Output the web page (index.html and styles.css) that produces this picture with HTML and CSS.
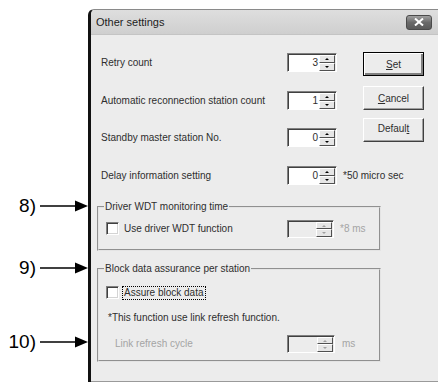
FILE: index.html
```html
<!DOCTYPE html>
<html lang="en">
<head>
<meta charset="UTF-8">
<title>Other settings</title>
<link rel="stylesheet" href="styles.css">
</head>
<body>
<div class="page">
    <div class="callouts">
        <div class="callout c8"><span>8)</span><svg width="48" height="12" viewBox="0 0 48 12"><line x1="0" y1="6" x2="36" y2="6" stroke="#000" stroke-width="1.3"/><polygon points="35,0.5 48,6 35,11.5" fill="#000"/></svg></div>
        <div class="callout c9"><span>9)</span><svg width="48" height="12" viewBox="0 0 48 12"><line x1="0" y1="6" x2="36" y2="6" stroke="#000" stroke-width="1.3"/><polygon points="35,0.5 48,6 35,11.5" fill="#000"/></svg></div>
        <div class="callout c10"><span>10)</span><svg width="48" height="12" viewBox="0 0 48 12"><line x1="0" y1="6" x2="36" y2="6" stroke="#000" stroke-width="1.3"/><polygon points="35,0.5 48,6 35,11.5" fill="#000"/></svg></div>
    </div>

    <div class="dialog">
        <div class="titlebar">
            <span class="title">Other settings</span>
            <span class="close"><svg width="10" height="8" viewBox="0 0 10 8"><path d="M1 0.5 L9 7.5 M9 0.5 L1 7.5" stroke="#fff" stroke-width="2"/></svg></span>
        </div>
        <div class="client">
            <div class="top">
                <div class="rows">
                    <div class="row">
                        <span class="label">Retry count</span>
                        <div class="spin"><span class="val">3</span><span class="btns"><i class="up"></i><i class="down"></i></span></div>
                    </div>
                    <div class="row">
                        <span class="label">Automatic reconnection station count</span>
                        <div class="spin"><span class="val">1</span><span class="btns"><i class="up"></i><i class="down"></i></span></div>
                    </div>
                    <div class="row">
                        <span class="label">Standby master station No.</span>
                        <div class="spin"><span class="val">0</span><span class="btns"><i class="up"></i><i class="down"></i></span></div>
                    </div>
                    <div class="row">
                        <span class="label">Delay information setting</span>
                        <div class="spin"><span class="val">0</span><span class="btns"><i class="up"></i><i class="down"></i></span></div>
                        <span class="suffix">*50 micro sec</span>
                    </div>
                </div>
                <div class="buttons">
                    <div class="btn default-btn"><span><u>S</u>et</span></div>
                    <div class="btn cancel"><span><u>C</u>ancel</span></div>
                    <div class="btn reset"><span>Defaul<u>t</u></span></div>
                </div>
            </div>

            <fieldset class="group wdt">
                <legend>Driver WDT monitoring time</legend>
                <div class="grow">
                    <span class="check"></span>
                    <span class="glabel">Use driver WDT function</span>
                    <div class="spin off small"><span class="val"></span><span class="btns"><i class="up"></i><i class="down"></i></span></div>
                    <span class="suffix dim">*8 ms</span>
                </div>
            </fieldset>

            <fieldset class="group block">
                <legend>Block data assurance per station</legend>
                <div class="grow assure">
                    <span class="check"></span>
                    <span class="focus">Assure block data</span>
                </div>
                <div class="note">*This function use link refresh function.</div>
                <div class="grow link">
                    <span class="linklabel dim">Link refresh cycle</span>
                    <div class="spin off mid"><span class="val"></span><span class="btns"><i class="up"></i><i class="down"></i></span></div>
                    <span class="suffix dim ms">ms</span>
                </div>
            </fieldset>
        </div>
    </div>
</div>
</body>
</html>
```

FILE: styles.css
```css
body {
    margin: 0;
    background: #fff;
    font-family: "Liberation Sans", Arial, sans-serif;
    font-size: 10px;
    color: #2e2e2e;
}
.page {
    display: flex;
    height: 383px;
    overflow: hidden;
}

/* callout numbers on the left */
.callouts {
    width: 88px;
    flex: none;
    padding-top: 195px;
    display: flex;
    flex-direction: column;
}
.callout {
    display: flex;
    align-items: center;
    justify-content: flex-end;
    gap: 4px;
    height: 22px;
    font-size: 19px;
    color: #000;
}
.c9 {
    margin-top: 40px;
}
.c10 {
    margin-top: 52px;
}

/* dialog window */
.dialog {
    margin-top: 9px;
    width: 347px;
    height: 372px;
    flex: none;
    border-left: 3px solid #111;
    border-top: 1px solid #8a8a8a;
    border-top-left-radius: 6px;
    background: #ececec;
    display: flex;
    flex-direction: column;
    overflow: hidden;
}
.titlebar {
    height: 24px;
    flex: none;
    display: flex;
    align-items: center;
    justify-content: space-between;
    padding: 0 6px 0 5px;
    background: linear-gradient(#dedede, #cfcfcf);
    border-bottom: 1px solid #c4c4c4;
}
.title {
    font-size: 11px;
    color: #1c1c1c;
}
.close {
    width: 26px;
    height: 15px;
    box-sizing: border-box;
    border: 1px solid #4a4a4a;
    border-radius: 3px;
    background: linear-gradient(#a0a0a0, #6a6a6a 50%, #5a5a5a);
    display: flex;
    align-items: center;
    justify-content: center;
}
.client {
    flex: 1;
    padding: 18px 0 0 6px;
    border-bottom: 1px solid #9a9a9a;
}

/* top settings */
.top {
    display: flex;
}
.rows {
    width: 262px;
    padding-left: 4px;
    display: flex;
    flex-direction: column;
    gap: 18.67px;
    white-space: nowrap;
}
.row {
    display: flex;
    align-items: center;
    height: 19px;
}
.label {
    width: 186px;
    flex: none;
}
.suffix {
    margin-left: 6px;
}
.dim {
    color: #a4a4a4;
}

/* spin boxes */
.spin {
    width: 50px;
    height: 19px;
    flex: none;
    box-sizing: border-box;
    display: flex;
    border: 1px solid;
    border-color: #808080 #fff #fff #808080;
    box-shadow: inset 1px 1px 0 #404040;
    padding: 1px 1px 0 1px;
}
.spin .val {
    flex: 1;
    background: #fff;
    text-align: right;
    padding-right: 1px;
    line-height: 16px;
}
.spin .btns {
    width: 16px;
    display: flex;
    flex-direction: column;
}
.spin i {
    flex: 1;
    position: relative;
    background: #e6e6e6;
    border: 1px solid;
    border-color: #fff #505050 #505050 #fff;
}
.spin i::after {
    content: "";
    position: absolute;
    left: 5px;
    border-left: 2px solid transparent;
    border-right: 2px solid transparent;
}
.spin .up::after {
    top: 2px;
    border-bottom: 2px solid #000;
}
.spin .down::after {
    top: 2px;
    border-top: 2px solid #000;
}
.spin.off .val {
    background: #ececec;
}
.spin.off i::after {
    border-top-color: #a0a0a0;
    border-bottom-color: #a0a0a0;
}
.spin.off .down::after {
    border-bottom-color: transparent;
}
.spin.off .up::after {
    border-top-color: transparent;
}
.spin.small {
    width: 47px;
    height: 18px;
}
.spin.mid {
    width: 48px;
    height: 18px;
}

/* push buttons */
.buttons {
    width: 61px;
    margin-top: -1px;
    display: flex;
    flex-direction: column;
}
.btn {
    height: 24px;
    box-sizing: border-box;
    display: flex;
    align-items: center;
    justify-content: center;
    background: #ececec;
    border: 1px solid;
    border-color: #fff #404040 #404040 #fff;
    box-shadow: inset -1px -1px 0 #a0a0a0;
}
.default-btn {
    border: 1px solid #000;
    box-shadow: inset 1px 1px 0 #fff, inset -2px -2px 0 #808080;
}
.cancel {
    margin-top: 10px;
}
.reset {
    margin-top: 8px;
}
.reset span {
    margin-top: -3px;
}

/* group boxes */
.group {
    width: 284px;
    box-sizing: border-box;
    margin: 16px 0 0 0;
    padding: 0 0 11px 7px;
    border: 2px groove #e4e4e4;
}
.group legend {
    margin-left: -2px;
    padding: 0 1px;
    line-height: 12px;
}
.grow {
    display: flex;
    align-items: center;
    white-space: nowrap;
}
.wdt .grow {
    margin-top: 7px;
    height: 18px;
}
.check {
    width: 13px;
    height: 13px;
    flex: none;
    box-sizing: border-box;
    background: #fff;
    border: 1px solid;
    border-color: #808080 #fff #fff #808080;
    box-shadow: inset 1px 1px 0 #404040, inset -1px -1px 0 #d4d4d4;
}
.glabel {
    width: 163px;
    margin-left: 5px;
}
.block {
    margin-top: 12px;
    padding-bottom: 7px;
}
.assure {
    margin-top: 11px;
    height: 14px;
}
.focus {
    margin-left: 4px;
    padding: 0 1px;
    line-height: 12px;
    outline: 1px dotted #000;
}
.note {
    margin-top: 12px;
    margin-left: 2px;
    line-height: 12px;
}
.link {
    margin-top: 11px;
    height: 18px;
}
.linklabel {
    width: 172px;
    margin-left: 9px;
}
.ms {
    margin-left: 7px;
}
```
